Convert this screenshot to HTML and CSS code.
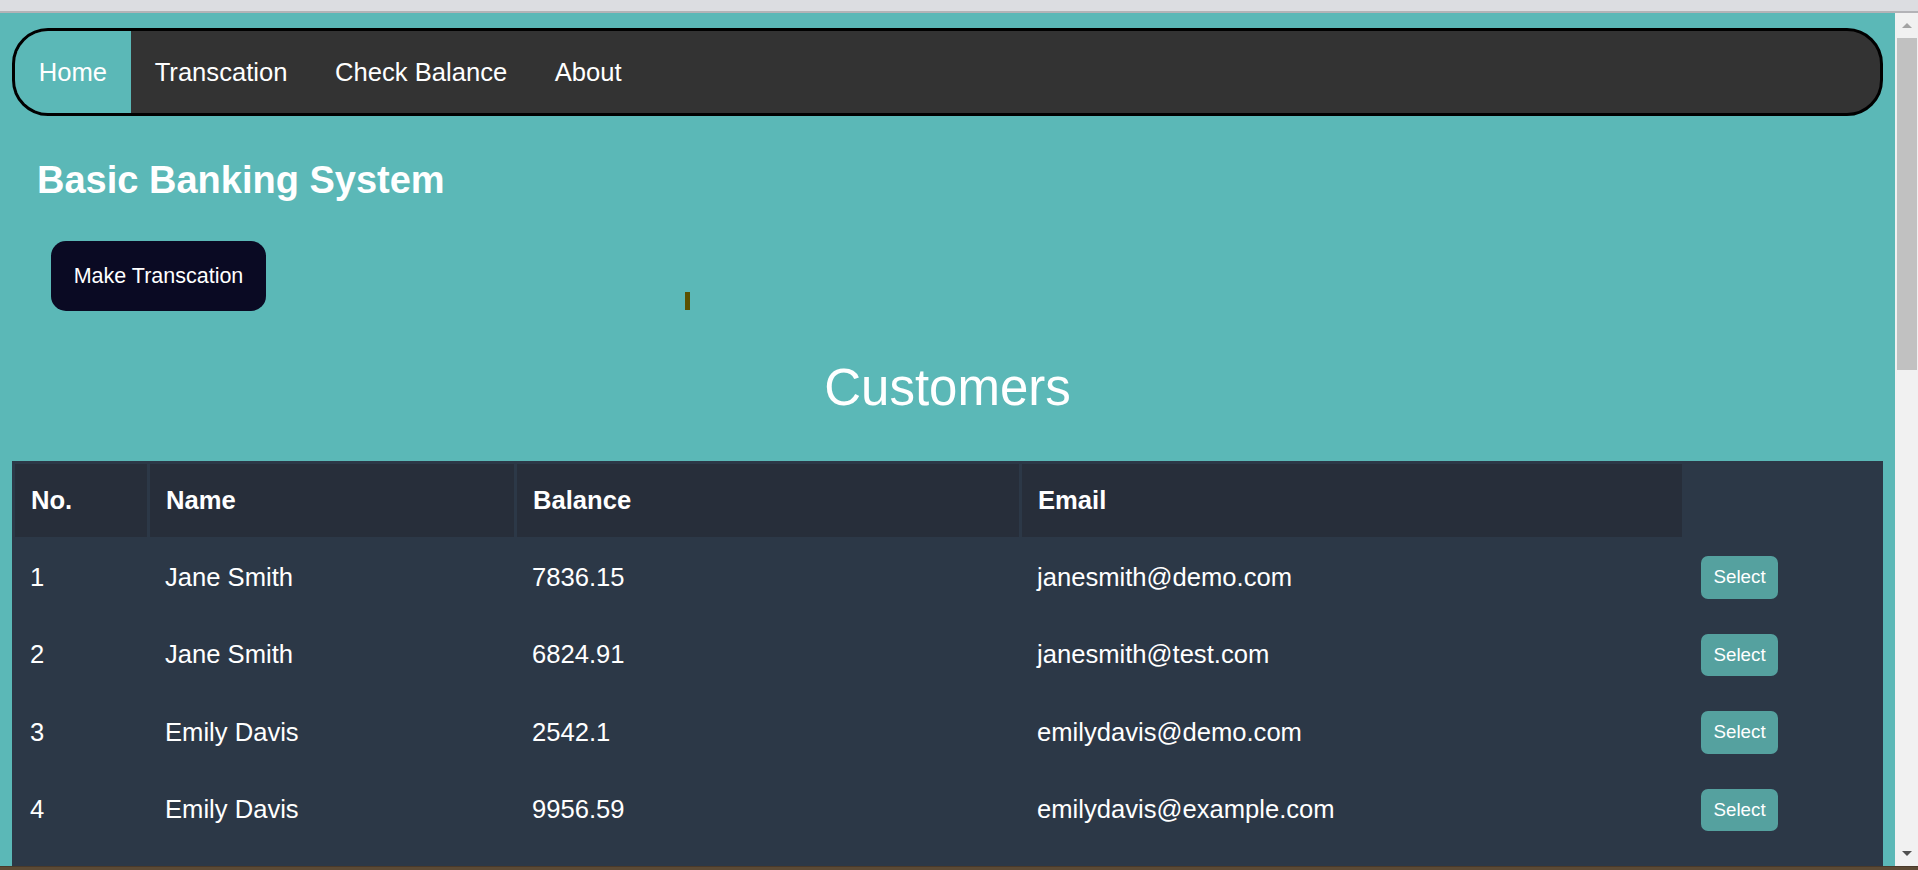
FILE: index.html
```html
<!DOCTYPE html>
<html lang="en">
<head>
<meta charset="utf-8">
<title>Basic Banking System</title>
<link rel="stylesheet" href="styles.css">
</head>
<body>
<div class="topbar"></div>
<div class="window">
  <div class="page">
    <nav class="nav">
      <ul class="menu">
        <li class="menu-item active"><a href="#">Home</a></li>
        <li class="menu-item"><a href="#">Transcation</a></li>
        <li class="menu-item"><a href="#">Check Balance</a></li>
        <li class="menu-item"><a href="#">About</a></li>
      </ul>
    </nav>
    <section class="hero">
      <h2 class="title">Basic Banking System</h2>
      <div class="actions">
        <button class="btn-make">Make Transcation</button>
        <span class="mark"></span>
      </div>
    </section>
    <h1 class="section-title">Customers</h1>
    <table class="customers">
      <colgroup>
        <col class="c-no"><col class="c-name"><col class="c-bal"><col class="c-mail"><col class="c-act">
      </colgroup>
      <thead>
        <tr><th>No.</th><th>Name</th><th>Balance</th><th>Email</th><th class="th-empty"></th></tr>
      </thead>
      <tbody>
        <tr><td>1</td><td>Jane Smith</td><td>7836.15</td><td>janesmith@demo.com</td><td><button class="btn-select">Select</button></td></tr>
        <tr><td>2</td><td>Jane Smith</td><td>6824.91</td><td>janesmith@test.com</td><td><button class="btn-select">Select</button></td></tr>
        <tr><td>3</td><td>Emily Davis</td><td>2542.1</td><td>emilydavis@demo.com</td><td><button class="btn-select">Select</button></td></tr>
        <tr><td>4</td><td>Emily Davis</td><td>9956.59</td><td>emilydavis@example.com</td><td><button class="btn-select">Select</button></td></tr>
        <tr class="row-clipped"><td></td><td></td><td></td><td></td><td><button class="btn-select btn-clipped" aria-label="Select"></button></td></tr>
      </tbody>
    </table>
  </div>
  <div class="scrollbar">
    <span class="arrow-up"></span>
    <span class="thumb"></span>
    <span class="arrow-down"></span>
  </div>
</div>
<div class="bottombar"></div>
</body>
</html>
```
FILE: styles.css
```css
* { box-sizing: border-box; }
html, body {
  margin: 0;
  padding: 0;
  width: 1918px;
  height: 870px;
  overflow: hidden;
  font-family: "Liberation Sans", Arial, sans-serif;
}
.topbar {
  height: 13px;
  background: #dcdde1;
  border-bottom: 2px solid #b3b3b7;
}
.window {
  display: flex;
  height: 853px;
}
.page {
  flex: 1;
  background: #5bb8b7;
  overflow: hidden;
  padding: 15px 12px 0 12px;
}
.bottombar {
  height: 4px;
  background: #5c4a35;
  border-top: 1px solid #4a3a2a;
}

/* scrollbar */
.scrollbar {
  width: 23px;
  background: #f1f1f1;
  display: flex;
  flex-direction: column;
  align-items: center;
  padding: 10px 0 0 1px;
}
.arrow-up {
  width: 0; height: 0;
  border-left: 5px solid transparent;
  border-right: 5px solid transparent;
  border-bottom: 5px solid #a3a3a3;
}
.thumb {
  width: 20px;
  height: 332px;
  margin-top: 10px;
  background: #c1c1c1;
}
.arrow-down {
  margin-top: auto;
  margin-bottom: 10px;
  width: 0; height: 0;
  border-left: 5px solid transparent;
  border-right: 5px solid transparent;
  border-top: 5px solid #505050;
}

/* nav */
.nav {
  background: #333333;
  border: 3px solid #000;
  border-radius: 36px;
  overflow: hidden;
  height: 88px;
}
.menu {
  list-style: none;
  margin: 0;
  padding: 0;
  display: flex;
  height: 82px;
}
.menu-item a {
  display: block;
  padding: 0 23.8px;
  line-height: 82px;
  color: #ffffff;
  text-decoration: none;
  font-size: 25.6px;
}
.menu-item.active {
  background: #5bb8b7;
}

/* hero */
.hero {
  padding: 0 0 0 25px;
}
.title {
  margin: 42.5px 0 0 0;
  font-size: 38px;
  font-weight: bold;
  color: #ffffff;
  line-height: normal;
}
.actions {
  display: flex;
  align-items: flex-end;
  margin-top: 39.5px;
  padding-left: 14px;
}
.btn-make {
  width: 215px;
  height: 70px;
  border: none;
  border-radius: 15px;
  background: #0a0a23;
  color: #ffffff;
  font-family: "Liberation Sans", Arial, sans-serif;
  font-size: 21.5px;
  padding: 0;
}
.mark {
  display: block;
  width: 5px;
  height: 18px;
  margin-left: 419px;
  margin-bottom: 1px;
  background: #5b5100;
}

.section-title {
  margin: 46.5px 0 0 0;
  text-align: center;
  font-size: 51px;
  font-weight: normal;
  color: #ffffff;
  line-height: normal;
}

/* table */
.customers {
  margin-top: 44.5px;
  width: 1871px;
  table-layout: fixed;
  border-spacing: 3px;
  background: #2c3847;
  color: #ffffff;
  font-size: 25.6px;
}
.c-no { width: 132px; }
.c-name { width: 364px; }
.c-bal { width: 502px; }
.c-mail { width: 660px; }
.c-act { width: 195px; }
.customers th {
  background: #272e3a;
  text-align: left;
  font-weight: bold;
  padding: 22px 16px;
  height: 73px;
}
.customers th.th-empty {
  background: transparent;
}
.customers td {
  padding: 16px 16px 16px 15px;
  height: 74.5px;
  text-align: left;
}
.btn-select {
  height: 42.5px;
  padding: 0 12.5px;
  margin-left: 1px;
  border: none;
  border-radius: 7px;
  background: #55a19f;
  color: #ffffff;
  font-family: "Liberation Sans", Arial, sans-serif;
  font-size: 18.75px;
  display: block;
}
.btn-clipped {
  width: 77px;
}
```
